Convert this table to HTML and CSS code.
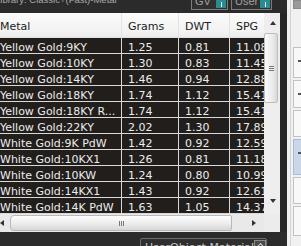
FILE: index.html
```html
<!DOCTYPE html>
<html>
<head>
<meta charset="utf-8">
<link rel="stylesheet" href="styles.css">
</head>
<body>
<div class="app">
  <div class="main">
    <div class="topbar">
      <span class="lib">Library: Classic+(Fast)-Metal</span>
      <div class="toggles">
        <div class="tog tog-gv"><span class="tog-label">GV</span><span class="sw"><span class="sw-tick"></span></span></div>
        <div class="tog tog-user"><span class="tog-label">User</span><span class="sw"><span class="sw-tick"></span></span></div>
      </div>
    </div>
    <div class="middle">
      <div class="grid">
        <div class="gridbody">
          <div class="table">
            <div class="row head"><div class="c c1">Metal</div><div class="c">Grams</div><div class="c">DWT</div><div class="c">SPG</div></div>
            <div class="row"><div class="c c1">Yellow Gold:9KY</div><div class="c">1.25</div><div class="c">0.81</div><div class="c">11.08</div></div>
            <div class="row"><div class="c c1">Yellow Gold:10KY</div><div class="c">1.30</div><div class="c">0.83</div><div class="c">11.45</div></div>
            <div class="row"><div class="c c1">Yellow Gold:14KY</div><div class="c">1.46</div><div class="c">0.94</div><div class="c">12.88</div></div>
            <div class="row"><div class="c c1">Yellow Gold:18KY</div><div class="c">1.74</div><div class="c">1.12</div><div class="c">15.41</div></div>
            <div class="row"><div class="c c1">Yellow Gold:18KY R...</div><div class="c">1.74</div><div class="c">1.12</div><div class="c">15.41</div></div>
            <div class="row"><div class="c c1">Yellow Gold:22KY</div><div class="c">2.02</div><div class="c">1.30</div><div class="c">17.89</div></div>
            <div class="row"><div class="c c1">White Gold:9K PdW</div><div class="c">1.42</div><div class="c">0.92</div><div class="c">12.59</div></div>
            <div class="row"><div class="c c1">White Gold:10KX1</div><div class="c">1.26</div><div class="c">0.81</div><div class="c">11.18</div></div>
            <div class="row"><div class="c c1">White Gold:10KW</div><div class="c">1.24</div><div class="c">0.80</div><div class="c">10.99</div></div>
            <div class="row"><div class="c c1">White Gold:14KX1</div><div class="c">1.43</div><div class="c">0.92</div><div class="c">12.61</div></div>
            <div class="row"><div class="c c1">White Gold:14K PdW</div><div class="c">1.63</div><div class="c">1.05</div><div class="c">14.37</div></div>
          </div>
          <div class="vscroll">
            <div class="vbtn"><span class="tri tri-up"></span></div>
            <div class="vthumb"><span class="grip-h"></span><span class="grip-h"></span><span class="grip-h"></span></div>
            <div class="vspace"></div>
            <div class="vbtn vbtn-down"><span class="tri tri-down"></span></div>
          </div>
        </div>
        <div class="hscroll">
          <div class="hbar">
            <div class="hbtn hbtn-left"><span class="tri tri-left"></span></div>
            <div class="hthumb"><span class="grip-v"></span><span class="grip-v"></span><span class="grip-v"></span></div>
            <div class="hspace"></div>
            <div class="hbtn hbtn-right"><span class="tri tri-right"></span></div>
          </div>
          <div class="corner"></div>
        </div>
      </div>
      <div class="sep"></div>
    </div>
    <div class="bottom">
      <div class="field"><span class="field-text">UserObject Material</span><span class="fbtn"><span class="caret"></span></span></div>
    </div>
  </div>
  <div class="side">
    <div class="sidecol">
      <div class="sitem s1"></div>
      <div class="sitem s2"><span class="smark"></span></div>
      <div class="sitem s3"><span class="smark"></span></div>
      <div class="sitem s4"></div>
      <div class="sitem s5 sel"><span class="smark"></span></div>
      <div class="sitem s6"></div>
      <div class="sitem s7"></div>
    </div>
  </div>
</div>
</body>
</html>
```

FILE: styles.css
```css
html, body {
  margin: 0;
  padding: 0;
  background: #2b2b2b;
  overflow: hidden;
}
.app {
  display: flex;
  width: 301px;
  height: 246px;
  overflow: hidden;
  font-family: "DejaVu Sans", Verdana, sans-serif;
}
.main {
  width: 287px;
  display: flex;
  flex-direction: column;
  background: #2b2b2b;
}
.topbar {
  height: 13px;
  display: flex;
  align-items: flex-start;
  overflow: hidden;
}
.lib {
  font-family: "Liberation Sans", Arial, sans-serif;
  font-size: 9.5px;
  line-height: 10px;
  color: #a9a9a9;
  margin-top: -5px;
  text-indent: -5px;
  white-space: nowrap;
}
.toggles {
  margin-left: auto;
  margin-right: 15px;
  display: flex;
  gap: 3px;
}
.tog {
  height: 9px;
  border: 1px solid #7c7c7c;
  border-top: none;
  background: #303030;
  display: flex;
  justify-content: space-between;
  align-items: flex-end;
  padding-left: 3px;
}
.tog-gv { width: 32px; }
.tog-user { width: 36px; }
.tog-label {
  font-family: "Liberation Sans", Arial, sans-serif;
  font-size: 11px;
  line-height: 11px;
  color: #a0a0a0;
  margin-bottom: 2px;
}
.sw {
  width: 10px;
  height: 8px;
  margin: 0 1px 1px 0;
  background: #2a8b90;
  display: flex;
  justify-content: center;
}
.sw-tick {
  width: 1px;
  height: 5px;
  margin-top: 2px;
  background: #e8f4f4;
}
.middle {
  display: flex;
  height: 219px;
}
.grid {
  width: 280px;
  display: flex;
  flex-direction: column;
  background: #ececec;
}
.gridbody {
  display: flex;
  height: 201px;
}
.table {
  width: 264px;
  overflow: hidden;
  background: #211e1b;
}
.row {
  display: grid;
  grid-template-columns: 122px 57px 51px 1fr;
  height: 16px;
}
.c {
  box-sizing: border-box;
  height: 16px;
  border-right: 1px solid #d9d9d9;
  border-bottom: 1px solid #d9d9d9;
  padding: 2px 0 0 6px;
  font-size: 11px;
  line-height: 15px;
  color: #ececec;
  white-space: nowrap;
  overflow: hidden;
}
.c1 { padding-left: 0; }
.row .c:last-child { border-right: none; }
.row.head {
  height: 25px;
  background: linear-gradient(#fbfbfb, #f3f3f3 70%, #ebebeb);
}
.head .c {
  height: 25px;
  color: #222;
  line-height: 23px;
  border-right: 1px solid #e3e3e3;
  border-bottom: 1px solid #e0e0e0;
}
.vscroll {
  width: 16px;
  display: flex;
  flex-direction: column;
  background: #eeeeee;
}
.vbtn {
  height: 20px;
  display: flex;
  justify-content: center;
  align-items: center;
}
.vbtn-down { height: 17px; align-items: flex-start; padding-top: 2px; box-sizing: border-box; }
.tri { width: 0; height: 0; display: block; }
.tri-up {
  border-left: 3.5px solid transparent;
  border-right: 3.5px solid transparent;
  border-bottom: 4px solid #333;
  margin-left: 1px;
}
.tri-down {
  border-left: 3.5px solid transparent;
  border-right: 3.5px solid transparent;
  border-top: 4px solid #333;
  margin-left: 2px;
}
.tri-left {
  border-top: 3.5px solid transparent;
  border-bottom: 3.5px solid transparent;
  border-right: 4px solid #333;
}
.tri-right {
  border-top: 3.5px solid transparent;
  border-bottom: 3.5px solid transparent;
  border-left: 4px solid #333;
}
.vthumb {
  height: 70px;
  margin: 0 2px 0 0;
  box-sizing: border-box;
  border: 1px solid #bdbdbd;
  border-radius: 2px;
  background: linear-gradient(90deg, #fbfbfb, #ebebeb 60%, #d9d9d9);
  display: flex;
  flex-direction: column;
  justify-content: center;
  align-items: center;
  gap: 1px;
}
.grip-h {
  width: 5px;
  height: 1px;
  background: #7a7a7a;
}
.vspace { flex: 1; }
.hscroll {
  height: 18px;
  display: flex;
}
.hbar {
  width: 264px;
  display: flex;
  align-items: center;
  background: #e9e9e9;
}
.hbtn {
  height: 18px;
  display: flex;
  align-items: center;
}
.hbtn-left { width: 10px; }
.hbtn-right { width: 12px; padding-left: 0; box-sizing: border-box; }
.hthumb {
  width: 222px;
  height: 16px;
  box-sizing: border-box;
  border: 1px solid #b9b9b9;
  border-radius: 4px 2px 2px 4px;
  background: linear-gradient(#fdfdfd, #eeeeee 50%, #d7d7d7);
  display: flex;
  justify-content: center;
  align-items: center;
  gap: 1px;
}
.grip-v {
  width: 1px;
  height: 5px;
  background: #777;
}
.hspace { flex: 1; }
.corner {
  width: 16px;
  background: #ececec;
}
.sep {
  width: 7px;
  background: #272727;
}
.bottom {
  height: 14px;
  display: flex;
  align-items: flex-start;
  overflow: hidden;
}
.field {
  margin: 6px 0 0 140px;
  width: 127px;
  height: 12px;
  box-sizing: border-box;
  border: 1px solid #6e6e6e;
  border-radius: 2px 2px 0 0;
  background: #2f2f2f;
  display: flex;
  align-items: flex-start;
}
.field-text {
  font-size: 11px;
  line-height: 13px;
  color: #c4c4c4;
  padding: 2px 0 0 4px;
  white-space: nowrap;
  flex: 1;
  overflow: hidden;
}
.fbtn {
  width: 12px;
  height: 10px;
  margin-top: 1px;
  box-sizing: border-box;
  border: 1px solid #8a8a8a;
  background: #4a4a4a;
  display: flex;
  justify-content: center;
  padding-top: 2px;
}
.caret {
  width: 4px;
  height: 4px;
  border-left: 1px solid #d0d0d0;
  border-top: 1px solid #d0d0d0;
  transform: rotate(45deg);
  margin-top: 1px;
}
.side {
  width: 14px;
  background: #f1f1f1;
  padding-left: 3px;
  box-sizing: border-box;
}
.sidecol {
  height: 246px;
  border-left: 1px solid #d3d3d3;
  display: flex;
  flex-direction: column;
  padding-left: 2px;
}
.sitem {
  box-sizing: border-box;
  border: 1px solid #c2c2c2;
  border-right: none;
  background: #f8f8f8;
  margin-bottom: 2px;
  position: relative;
}
.s1 { height: 9px; background: #9a9a9a; border-color: #8a8a8a; margin-bottom: 6px; }
.s2 { height: 31px; margin-top: 32px; }
.s3 { height: 28px; }
.s4 { height: 27px; }
.s5 { height: 36px; }
.s6 { height: 27px; }
.s7 { height: 30px; }
.sel { background: #c9d7e8; border-color: #a9bcd3; }
.smark {
  position: absolute;
  right: 0;
  top: 12px;
  width: 3px;
  height: 2px;
  background: #555;
}
```
